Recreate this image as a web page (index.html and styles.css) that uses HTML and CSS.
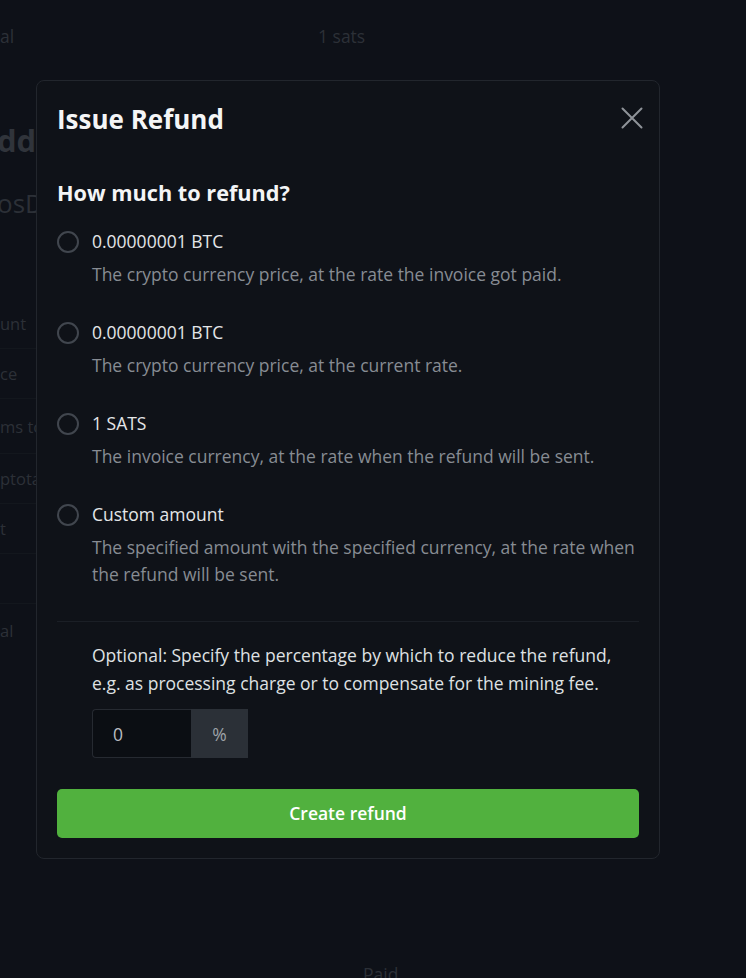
FILE: index.html
```html
<!DOCTYPE html>
<html lang="en">
<head>
<meta charset="utf-8">
<title>Issue Refund</title>
<link rel="stylesheet" href="styles.css">
</head>
<body>
<div class="page">
  <div class="top-row"><span>al</span><span>1 sats</span></div>
  <div class="bg-title">dd</div>
  <div class="bg-subtitle">osD</div>
  <ul class="bg-list">
    <li class="bg-row">unt</li>
    <li class="bg-row">ce</li>
    <li class="bg-row tall">ms to</li>
    <li class="bg-row">ptotal</li>
    <li class="bg-row">t</li>
    <li class="bg-row"></li>
    <li class="bg-row last">al</li>
  </ul>
  <div class="bg-paid">Paid</div>
</div>

<div class="modal" role="dialog" aria-labelledby="modal-title">
  <div class="modal-header">
    <h2 class="modal-title" id="modal-title">Issue Refund</h2>
    <button class="close-btn" type="button" aria-label="Close">
      <svg viewBox="0 0 24 24" width="24" height="24" aria-hidden="true"><path d="M2.5 2.5 L21.5 21.5 M21.5 2.5 L2.5 21.5" stroke="#8f9399" stroke-width="2" stroke-linecap="round" fill="none"/></svg>
    </button>
  </div>
  <h3 class="question">How much to refund?</h3>
  <div class="options">
    <label class="option">
      <span class="radio"></span>
      <span class="option-label">0.00000001 BTC</span>
      <span class="option-desc">The crypto currency price, at the rate the invoice got paid.</span>
    </label>
    <label class="option">
      <span class="radio"></span>
      <span class="option-label">0.00000001 BTC</span>
      <span class="option-desc">The crypto currency price, at the current rate.</span>
    </label>
    <label class="option">
      <span class="radio"></span>
      <span class="option-label">1 SATS</span>
      <span class="option-desc">The invoice currency, at the rate when the refund will be sent.</span>
    </label>
    <label class="option">
      <span class="radio"></span>
      <span class="option-label">Custom amount</span>
      <span class="option-desc">The specified amount with the specified currency, at the rate when the refund will be sent.</span>
    </label>
  </div>
  <hr class="divider">
  <div class="optional">
    <p class="optional-text">Optional: Specify the percentage by which to reduce the refund, e.g. as processing charge or to compensate for the mining fee.</p>
    <div class="input-group">
      <input class="pct-input" type="text" value="0">
      <span class="addon">%</span>
    </div>
  </div>
  <button class="primary-btn" type="button">Create refund</button>
</div>
</body>
</html>
```
FILE: styles.css
```css
html, body {
  margin: 0;
  padding: 0;
  background: #0e1118;
  font-family: "Open Sans", "Noto Sans", sans-serif;
  font-size: 17.5px;
}

.page {
  color: #2c3037;
  height: 978px;
  overflow: hidden;
}

.top-row {
  display: grid;
  grid-template-columns: 318px auto;
  margin-top: 24px;
  line-height: 24px;
}

.bg-title {
  margin-top: 72px;
  margin-left: -3px;
  font-size: 31px;
  font-weight: 700;
  line-height: 40px;
  color: #30343b;
}

.bg-subtitle {
  margin-top: 27px;
  margin-left: -3px;
  font-size: 26px;
  line-height: 32px;
  color: #2c3037;
}

.bg-list {
  list-style: none;
  margin: 80px 0 0;
  padding: 0;
  width: 60px;
  font-size: 16.5px;
}

.bg-row {
  height: 49px;
  line-height: 49px;
  border-bottom: 1px solid #13171d;
}

.bg-row.tall {
  height: 54px;
  line-height: 56px;
}

.bg-row.last {
  border-bottom: none;
  height: 56px;
  line-height: 54px;
}

.bg-paid {
  margin-top: 302px;
  margin-left: 363px;
  line-height: 24px;
}

.modal {
  position: absolute;
  left: 36px;
  top: 80px;
  width: 624px;
  box-sizing: border-box;
  background: #0f1218;
  border: 1px solid #22262d;
  border-radius: 8px;
  padding: 24px 20px 20px;
  color: #e2e4e6;
}

.modal-header {
  display: flex;
  justify-content: space-between;
  align-items: flex-start;
}

.modal-title {
  margin: 0;
  font-size: 26px;
  font-weight: 700;
  line-height: 29px;
  color: #f4f5f6;
}

.close-btn {
  display: flex;
  width: 24px;
  height: 24px;
  padding: 0;
  margin: 1px -5px 0 0;
  border: none;
  background: none;
  cursor: pointer;
}

.question {
  margin: 47px 0 0;
  font-size: 21.7px;
  font-weight: 700;
  line-height: 24px;
  color: #f4f5f6;
}

.options {
  display: flex;
  flex-direction: column;
  gap: 31px;
  margin-top: 23px;
}

.option {
  display: grid;
  grid-template-columns: 22px 1fr;
  column-gap: 13px;
  cursor: pointer;
}

.radio {
  grid-row: 1;
  width: 22px;
  height: 22px;
  box-sizing: border-box;
  border: 2px solid #41464e;
  border-radius: 50%;
  margin-top: 3px;
}

.option-label {
  grid-column: 2;
  line-height: 27px;
  color: #e4e6e8;
}

.option-desc {
  grid-column: 2;
  margin-top: 6px;
  line-height: 27px;
  color: #878c93;
}

.divider {
  margin: 33px 0 0;
  border: none;
  border-top: 1px solid #1b1f26;
}

.optional {
  padding-left: 35px;
  margin-top: 20px;
}

.optional-text {
  margin: 0;
  line-height: 27.5px;
  color: #dfe1e3;
}

.input-group {
  display: flex;
  margin-top: 12px;
  height: 49px;
}

.pct-input {
  width: 99px;
  box-sizing: border-box;
  height: 49px;
  padding: 0 0 0 20px;
  border: 1px solid #262a31;
  border-right: none;
  border-radius: 4px 0 0 4px;
  background: #0b0e13;
  color: #b9bdc2;
  font-family: inherit;
  font-size: 17.5px;
  outline: none;
}

.addon {
  display: flex;
  align-items: center;
  justify-content: center;
  width: 57px;
  background: #2b3037;
  color: #9ea2a8;
  font-size: 17.5px;
}

.primary-btn {
  display: block;
  width: 100%;
  height: 49px;
  margin-top: 31px;
  padding: 0 0 2px;
  border: none;
  border-radius: 5px;
  background: #51b13e;
  color: #ffffff;
  font-family: inherit;
  font-size: 17.5px;
  font-weight: 600;
  cursor: pointer;
}
```
